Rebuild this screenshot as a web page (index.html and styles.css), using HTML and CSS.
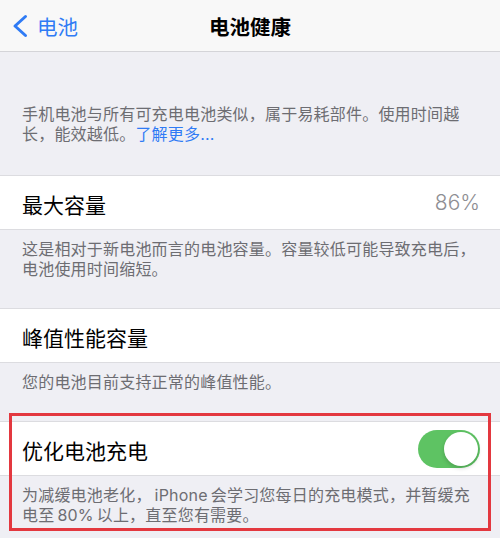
FILE: index.html
```html
<!DOCTYPE html>
<html lang="zh-CN">
  <head>
    <meta charset="UTF-8" />
    <meta name="viewport" content="width=device-width, initial-scale=1.0" />
    <title>电池健康</title>
    <link rel="stylesheet" href="styles.css">
  </head>
  <body>
    <header class="nav">
      <a class="nav-back" href="#">
        <svg class="chevron" width="16" height="24" viewBox="0 0 16 24">
          <polyline points="13.5,2.5 3,12 13.5,21.5" />
        </svg>
        <span>电池</span>
      </a>
      <h1 class="nav-title">电池健康</h1>
    </header>

    <p class="note note-top">
      手机电池与所有可充电电池类似，属于易耗部件。使用时间越<br />长，能效越低。<a class="link" href="#">了解更多...</a>
    </p>

    <div class="cell">
      <span class="cell-label">最大容量</span>
      <span class="cell-value">86%</span>
    </div>
    <p class="note">
      这是相对于新电池而言的电池容量。容量较低可能导致充电后，<br />电池使用时间缩短。
    </p>

    <div class="cell">
      <span class="cell-label">峰值性能容量</span>
    </div>
    <p class="note">您的电池目前支持正常的峰值性能。</p>

    <section class="group highlight">
      <div class="cell">
        <span class="cell-label">优化电池充电</span>
        <span class="switch on" role="switch" aria-checked="true"></span>
      </div>
      <p class="note">
        为减缓电池老化，<span class="latin">iPhone</span>会学习您每日的充电模式，并暂缓充<br />电至<span class="latin">80%</span>以上，直至您有需要。
      </p>
    </section>
  </body>
</html>
```

FILE: styles.css
```css
*,
*::before,
*::after {
  margin: 0;
  padding: 0;
  box-sizing: border-box;
}

body {
  font-family: Inter, "Noto Sans CJK SC", sans-serif;
  background-color: #efeff4;
  color: #000;
}

a {
  text-decoration: none;
}

/* top navigation bar */
.nav {
  height: 52px;
  display: grid;
  grid-template-columns: 1fr auto 1fr;
  align-items: center;
  background-color: #f8f8f8;
  border-bottom: 1px solid #d4d4d8;
}

.nav-back {
  display: flex;
  align-items: center;
  gap: 9px;
  padding-left: 12px;
  color: #2f7bf5;
  font-size: 20.5px;
}

.chevron {
  fill: none;
  stroke: #2f7bf5;
  stroke-width: 3;
  stroke-linecap: round;
  stroke-linejoin: round;
}

.nav-title {
  font-size: 20.5px;
  font-weight: 600;
}

/* grouped table text */
.note {
  padding: 9px 12px 29px 22px;
  font-size: 16px;
  letter-spacing: 0.2px;
  line-height: 20px;
  color: #6d6d72;
}

.note-top {
  padding-top: 52px;
  padding-bottom: 31px;
}

.latin {
  margin: 0 3px;
}

.link {
  color: #2f7bf5;
}

.cell {
  height: 55px;
  display: flex;
  align-items: center;
  justify-content: space-between;
  padding: 0 20px 0 22px;
  background-color: #fff;
  border-top: 1px solid #dcdce0;
  border-bottom: 1px solid #dcdce0;
}

.cell-label {
  font-size: 21px;
  padding-top: 2px;
}

.cell-value {
  font-size: 21px;
  font-weight: 300;
  color: #8e8e93;
}

.switch {
  width: 62px;
  height: 38px;
  border-radius: 19px;
  background-color: #e5e5ea;
  position: relative;
}

.switch.on {
  background-color: #5ec363;
}

.switch::after {
  content: "";
  position: absolute;
  top: 2px;
  left: 2px;
  width: 34px;
  height: 34px;
  border-radius: 50%;
  background-color: #fff;
  box-shadow: 0 2px 4px rgba(0, 0, 0, 0.18);
}

.switch.on::after {
  left: 26px;
}

/* red marker around the charging option */
.group {
  position: relative;
}

.highlight::after {
  content: "";
  position: absolute;
  top: -8px;
  left: 9px;
  right: 9px;
  height: 118px;
  border: 3px solid #e3383f;
  pointer-events: none;
}

.group .note {
  padding-bottom: 13px;
}
```
